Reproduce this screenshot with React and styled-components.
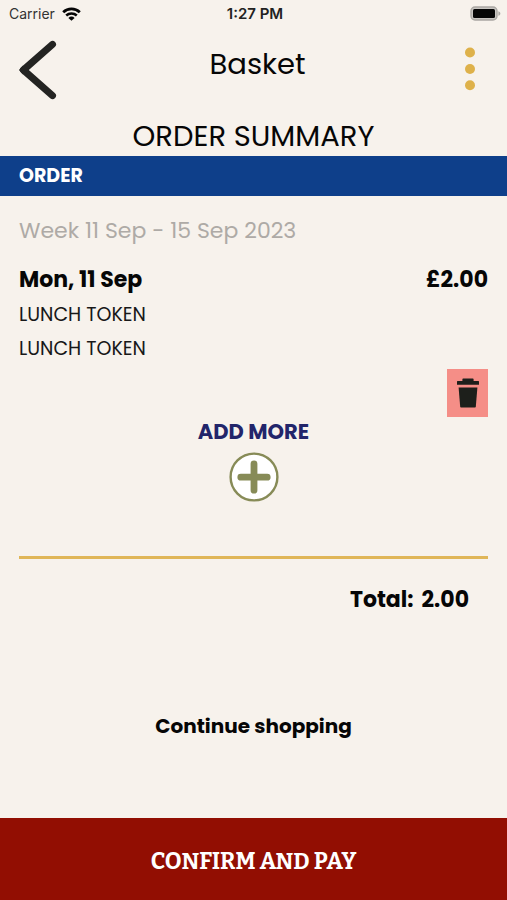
import React from "react";
import styled, { createGlobalStyle } from "styled-components";

const GlobalStyle = createGlobalStyle`
  * {
    box-sizing: border-box;
  }

  body {
    margin: 0;
    background-color: #f7f2ec;
  }

  button {
    border: none;
    padding: 0;
    background: none;
    font-family: inherit;
    cursor: pointer;
  }

  svg {
    display: block;
  }
`;

const BasketPageStyled = styled.div`
  min-height: 100vh;
  display: flex;
  flex-direction: column;
  background-color: #f7f2ec;
  color: #060606;
  font-family: "Poppins", "Inter", sans-serif;
`;

const StatusBar = styled.div`
  display: grid;
  grid-template-columns: 1fr auto 1fr;
  align-items: center;
  height: 27px;
  padding: 0 6px 0 9px;
  font-family: "Inter", sans-serif;
  font-size: 14px;
`;

const Carrier = styled.div`
  display: flex;
  align-items: center;
  gap: 7px;
  color: #333333;
`;

const Clock = styled.div`
  color: #222222;
  font-size: 15px;
  font-weight: 600;
`;

const Battery = styled.div`
  justify-self: end;
`;

const Header = styled.header`
  display: grid;
  grid-template-columns: 1fr auto 1fr;
  align-items: start;
  height: 89px;
  padding: 13px 28px 0 18px;
`;

const BackButton = styled.button`
  justify-self: start;
`;

const MenuButton = styled.button`
  justify-self: end;
  padding-top: 6px;
`;

const Title = styled.h1`
  margin: 4px 0 0;
  padding-left: 18px;
  font-size: 29px;
  font-weight: 400;
  line-height: 40px;
`;

const Summary = styled.h2`
  margin: 0;
  font-size: 29px;
  font-weight: 400;
  line-height: 40px;
  text-align: center;
`;

const SectionBar = styled.h3`
  margin: 0;
  padding: 0 19px;
  background-color: #0e3f8a;
  color: #ffffff;
  font-size: 19px;
  font-weight: 700;
  line-height: 40px;
`;

const Content = styled.main`
  flex: 1;
  display: flex;
  flex-direction: column;
  padding: 17px 19px 0;
`;

const Week = styled.div`
  color: #aeaaa6;
  font-size: 22px;
  line-height: 36px;
`;

const DayRow = styled.div`
  display: flex;
  justify-content: space-between;
  margin-top: 13px;
  font-size: 22px;
  font-weight: 700;
  line-height: 36px;
`;

const ItemList = styled.ul`
  margin: 0;
  padding: 0;
  list-style: none;
`;

const Item = styled.li`
  color: #181818;
  font-size: 19px;
  line-height: 34px;
`;

const DeleteButton = styled.button`
  align-self: flex-end;
  display: flex;
  align-items: center;
  justify-content: center;
  width: 41px;
  height: 48px;
  margin-top: 3px;
  background-color: #f58e87;
`;

const AddMoreButton = styled.button`
  align-self: center;
  display: flex;
  flex-direction: column;
  align-items: center;
  gap: 5px;
  color: #22256a;
  font-size: 21px;
  font-weight: 700;
  line-height: 30px;
`;

const Divider = styled.hr`
  width: 100%;
  height: 3px;
  margin: 54px 0 0;
  border: none;
  background-color: #e0b658;
`;

const Total = styled.div`
  display: flex;
  justify-content: flex-end;
  gap: 8px;
  margin-top: 23px;
  padding-right: 19px;
  font-size: 22px;
  font-weight: 700;
  line-height: 36px;
`;

const ContinueButton = styled.button`
  align-self: center;
  margin: 93px 0 32px;
  color: #060606;
  font-size: 20px;
  font-weight: 700;
  line-height: 30px;
`;

const ConfirmButton = styled.button`
  width: 100%;
  height: 82px;
  padding-top: 3px;
  background-color: #920e02;
  color: #ffffff;
  && {
    font-family: "Bitter", "DejaVu Serif Condensed", "DejaVu Serif", serif;
  }
  font-size: 23px;
  font-weight: 700;
  line-height: 30px;
`;

const WifiIcon = () => (
  <svg width="19" height="14" viewBox="0 0 19 14" fill="none" aria-hidden="true">
    <path d="M1.2 5.2a12 12 0 0 1 16.6 0" stroke="#060606" strokeWidth="2.8" />
    <path d="M4.2 8.5a7.7 7.7 0 0 1 10.6 0" stroke="#060606" strokeWidth="2.5" />
    <path d="M9.5 13.8 6.4 10.9a4.4 4.4 0 0 1 6.2 0z" fill="#060606" />
  </svg>
);

const BatteryIcon = () => (
  <svg width="31" height="16" viewBox="0 0 31 16" aria-hidden="true">
    <rect x="1" y="1" width="26" height="13" rx="4" fill="#c9c6c2" stroke="#aaa7a3" strokeWidth="1.4" />
    <rect x="3" y="3" width="22" height="9" rx="1.5" fill="#060606" />
    <path d="M28.4 5.2c2.6 1 2.6 3.6 0 4.6z" fill="#aaa7a3" />
  </svg>
);

const BackIcon = () => (
  <svg width="40" height="60" viewBox="0 0 40 60" fill="none" aria-hidden="true">
    <path
      d="M34.5 4.4 5.4 30 34.5 55.6"
      stroke="#242422"
      strokeWidth="7"
      strokeLinecap="round"
      strokeLinejoin="round"
    />
    <path d="M1 30 5 25.4V34.6z" fill="#242422" />
  </svg>
);

const DotsIcon = () => (
  <svg width="18" height="46" viewBox="0 0 18 46" fill="#deb14a" aria-hidden="true">
    <circle cx="9" cy="6.5" r="5" />
    <circle cx="9" cy="23" r="5" />
    <circle cx="9" cy="39.3" r="5" />
  </svg>
);

const TrashIcon = () => (
  <svg width="22" height="30" viewBox="0 0 22 30" fill="#1d1f1b" aria-hidden="true">
    <path d="M0 3.6Q0 3 .6 3H5.4V1.2Q5.4 .4 6.2 .4H15.8Q16.6 .4 16.6 1.2V3H21.4Q22 3 22 3.6V6.8H0z" />
    <path d="M1.6 9.4H20.4L18.8 28.8Q18.7 29.4 18 29.4H4Q3.3 29.4 3.2 28.8z" />
  </svg>
);

const PlusIcon = () => (
  <svg width="50" height="50" viewBox="0 0 50 50" aria-hidden="true">
    <circle cx="25" cy="25" r="23.4" fill="#ffffff" stroke="#878b57" strokeWidth="2.4" />
    <path d="M25 11.8v26.4M11.8 25.2h26.4" stroke="#878b57" strokeWidth="6.8" strokeLinecap="round" />
  </svg>
);

const items = [
  { id: 1, name: "LUNCH TOKEN" },
  { id: 2, name: "LUNCH TOKEN" },
];

const App = () => {
  return (
    <BasketPageStyled>
      <GlobalStyle />
      <StatusBar>
        <Carrier>
          Carrier
          <WifiIcon />
        </Carrier>
        <Clock>1:27 PM</Clock>
        <Battery>
          <BatteryIcon />
        </Battery>
      </StatusBar>

      <Header>
        <BackButton aria-label="Back">
          <BackIcon />
        </BackButton>
        <Title>Basket</Title>
        <MenuButton aria-label="Menu">
          <DotsIcon />
        </MenuButton>
      </Header>

      <Summary>ORDER SUMMARY</Summary>
      <SectionBar>ORDER</SectionBar>

      <Content>
        <Week>Week 11 Sep - 15 Sep 2023</Week>
        <DayRow>
          <span>Mon, 11 Sep</span>
          <span>£2.00</span>
        </DayRow>
        <ItemList>
          {items.map((item) => (
            <Item key={item.id}>{item.name}</Item>
          ))}
        </ItemList>
        <DeleteButton aria-label="Delete order">
          <TrashIcon />
        </DeleteButton>

        <AddMoreButton>
          ADD MORE
          <PlusIcon />
        </AddMoreButton>

        <Divider />
        <Total>
          <span>Total:</span>
          <span>2.00</span>
        </Total>

        <ContinueButton>Continue shopping</ContinueButton>
      </Content>

      <ConfirmButton>CONFIRM AND PAY</ConfirmButton>
    </BasketPageStyled>
  );
};

export default App;
